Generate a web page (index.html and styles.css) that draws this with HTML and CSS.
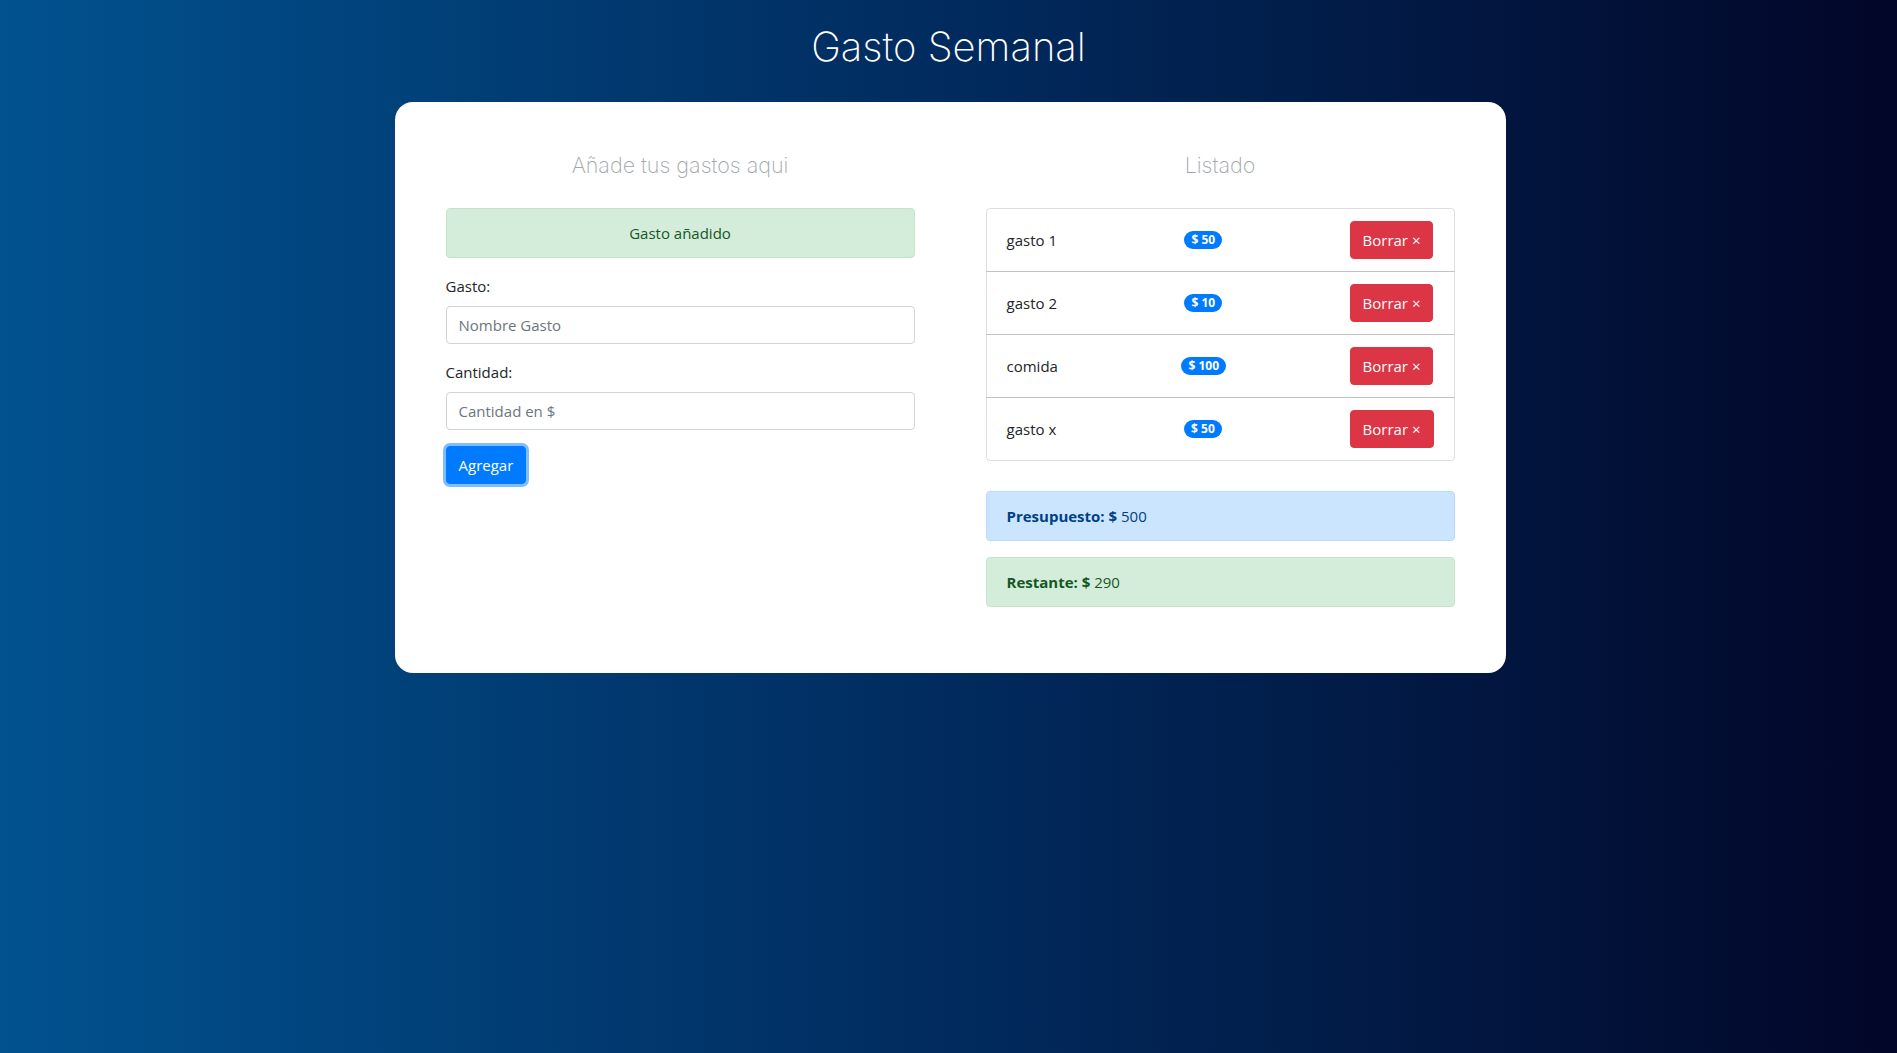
FILE: index.html
```html
<!DOCTYPE html>
<html lang="es">
<head>
<meta charset="utf-8">
<title>Gasto Semanal</title>
<link rel="stylesheet" href="styles.css">
</head>
<body>
<header class="header">
  <h1 class="title">Gasto Semanal</h1>
</header>
<main class="card">
  <section class="col">
    <h2 class="col-title">Añade tus gastos aqui</h2>
    <div class="alert alert-success alert-center">Gasto añadido</div>
    <form class="form">
      <div class="form-group">
        <label class="label" for="gasto">Gasto:</label>
        <input class="input" id="gasto" type="text" placeholder="Nombre Gasto">
      </div>
      <div class="form-group">
        <label class="label" for="cantidad">Cantidad:</label>
        <input class="input" id="cantidad" type="text" placeholder="Cantidad en $">
      </div>
      <button type="button" class="btn btn-primary">Agregar</button>
    </form>
  </section>
  <section class="col">
    <h2 class="col-title">Listado</h2>
    <ul class="list">
      <li class="list-item"><span class="item-name">gasto 1</span><span class="badge">$ 50</span><button type="button" class="btn btn-danger">Borrar &times;</button></li>
      <li class="list-item"><span class="item-name">gasto 2</span><span class="badge">$ 10</span><button type="button" class="btn btn-danger">Borrar &times;</button></li>
      <li class="list-item"><span class="item-name">comida</span><span class="badge">$ 100</span><button type="button" class="btn btn-danger">Borrar &times;</button></li>
      <li class="list-item"><span class="item-name">gasto x</span><span class="badge">$ 50</span><button type="button" class="btn btn-danger">Borrar &times;</button></li>
    </ul>
    <div class="alert alert-primary alert-budget"><strong>Presupuesto: $</strong> 500</div>
    <div class="alert alert-success"><strong>Restante: $</strong> 290</div>
  </section>
</main>
</body>
</html>
```
FILE: styles.css
```css
* { box-sizing: border-box; }

html, body { height: 100%; }

body {
  margin: 0;
  min-height: 100vh;
  background: linear-gradient(to right, #01528f 0%, #012b5e 50%, #020628 100%);
  font-family: "Open Sans", "Liberation Sans", sans-serif;
  font-size: 15px;
  line-height: 24px;
  color: #212529;
}

.header {
  padding-top: 23px;
  text-align: center;
}

.title {
  margin: 0 0 31px;
  font-family: "Inter", "Lato", sans-serif;
  font-weight: 200;
  font-size: 40px;
  line-height: 48px;
  color: #ffffff;
}

.card {
  width: 1111px;
  margin: 0 0 0 calc(50% - 554px);
  background: #ffffff;
  border-radius: 18px;
  padding: 50px 51px;
  display: grid;
  grid-template-columns: 1fr 1fr;
  column-gap: 71px;
  align-items: start;
}

.col { min-width: 0; }

.col-title {
  margin: 0 0 30px;
  font-family: "Inter", "Lato", sans-serif;
  font-weight: 200;
  font-size: 21.5px;
  line-height: 26px;
  color: #a1a7ad;
  text-align: center;
}

.alert {
  border: 1px solid transparent;
  border-radius: 4px;
  padding: 12px 20px;
  margin-bottom: 16px;
}

.alert-success {
  background: #d4edda;
  border-color: #c3e6cb;
  color: #155724;
}

.alert-primary {
  background: #cce5ff;
  border-color: #b8daff;
  color: #004085;
}

.alert-center { text-align: center; }

.alert-budget { margin-top: 30px; }

.form { margin: 0; }

.form-group { margin-bottom: 16px; }

.label {
  display: block;
  margin-bottom: 8px;
}

.input {
  display: block;
  width: 100%;
  height: 38px;
  padding: 6px 12px;
  font: inherit;
  color: #495057;
  background: #ffffff;
  border: 1px solid #ced4da;
  border-radius: 4px;
}

.input::placeholder { color: #6c757d; opacity: 1; }

.btn {
  display: inline-block;
  font: inherit;
  line-height: 24px;
  padding: 6px 12px;
  border: 1px solid transparent;
  border-radius: 4px;
  color: #ffffff;
  cursor: pointer;
}

.btn-primary {
  background: #007bff;
  border-color: #007bff;
  box-shadow: 0 0 0 3px rgba(0, 123, 255, 0.5);
}

.btn-danger {
  background: #dc3545;
  border-color: #dc3545;
}

.list {
  list-style: none;
  margin: 0;
  padding: 0;
}

.list-item {
  display: flex;
  justify-content: space-between;
  align-items: center;
  padding: 12px 20px;
  border: 1px solid rgba(0, 0, 0, 0.125);
  margin-bottom: -1px;
}

.list-item:first-child { border-radius: 4px 4px 0 0; }
.list-item:last-child { border-radius: 0 0 4px 4px; margin-bottom: 0; }

.badge {
  display: inline-block;
  background: #007bff;
  color: #ffffff;
  font-size: 12px;
  font-weight: 700;
  line-height: 12px;
  padding: 3px 7px;
  border-radius: 160px;
}
```
